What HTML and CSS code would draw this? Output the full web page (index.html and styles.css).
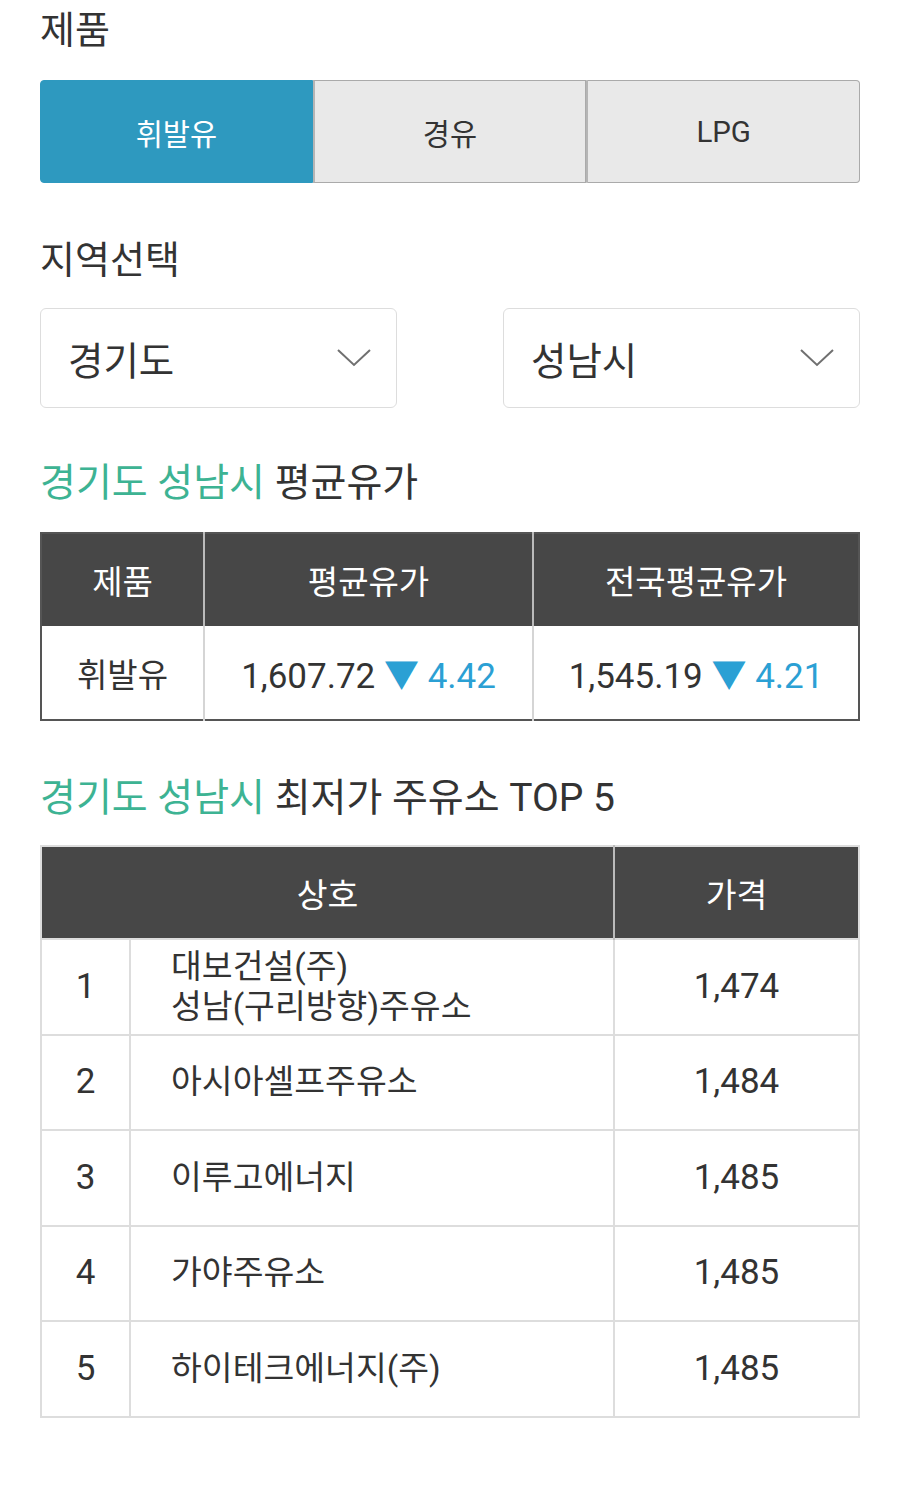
FILE: index.html
```html
<!DOCTYPE html>
<html lang="ko">
<head>
<meta charset="utf-8">
<link rel="stylesheet" href="styles.css">
</head>
<body>
<div class="page">
  <h2 class="title">제품</h2>
  <div class="tabs">
    <div class="tab active">휘발유</div>
    <div class="tab">경유</div>
    <div class="tab">LPG</div>
  </div>

  <h2 class="title region-title">지역선택</h2>
  <div class="selects">
    <div class="select">
      <span>경기도</span>
      <svg class="chev" width="36" height="20" viewBox="0 0 36 20"><path d="M2 2 L18 17 L34 2" fill="none" stroke="#707070" stroke-width="2"/></svg>
    </div>
    <div class="select">
      <span>성남시</span>
      <svg class="chev" width="36" height="20" viewBox="0 0 36 20"><path d="M2 2 L18 17 L34 2" fill="none" stroke="#707070" stroke-width="2"/></svg>
    </div>
  </div>

  <h3 class="heading avg-heading"><span class="green">경기도 성남시</span> 평균유가</h3>
  <table class="avg">
    <thead>
      <tr><th class="c1">제품</th><th class="c2">평균유가</th><th class="c3">전국평균유가</th></tr>
    </thead>
    <tbody>
      <tr>
        <td>휘발유</td>
        <td><span class="digits">1,607.72 <span class="blue">▼ 4.42</span></span></td>
        <td><span class="digits">1,545.19 <span class="blue">▼ 4.21</span></span></td>
      </tr>
    </tbody>
  </table>

  <h3 class="heading top-heading"><span class="green">경기도 성남시</span> 최저가 주유소 TOP 5</h3>
  <table class="top">
    <thead>
      <tr><th class="n" colspan="2">상호</th><th class="p">가격</th></tr>
    </thead>
    <tbody>
      <tr><td class="num">1</td><td class="name">대보건설(주)<br>성남(구리방향)주유소</td><td class="price">1,474</td></tr>
      <tr><td class="num">2</td><td class="name">아시아셀프주유소</td><td class="price">1,484</td></tr>
      <tr><td class="num">3</td><td class="name">이루고에너지</td><td class="price">1,485</td></tr>
      <tr><td class="num">4</td><td class="name">가야주유소</td><td class="price">1,485</td></tr>
      <tr><td class="num">5</td><td class="name">하이테크에너지(주)</td><td class="price">1,485</td></tr>
    </tbody>
  </table>
</div>
</body>
</html>
```

FILE: styles.css
```css
* { box-sizing: border-box; }
html, body { margin: 0; padding: 0; background: #fff; }
body {
  font-family: Roboto, "Noto Sans CJK KR", sans-serif;
  color: #333;
}
.page { padding: 0 40px; }

.title {
  margin: 0;
  font-size: 38px;
  font-weight: 400;
  line-height: 60px;
  color: #333;
}
.tabs {
  display: flex;
  margin-top: 20px;
  height: 103px;
}
.tab {
  flex: 1;
  display: flex;
  align-items: center;
  justify-content: center;
  font-size: 29.5px;
  background: #e9e9e9;
  border: 1px solid #aaa;
  color: #333;
}
.tab + .tab { border-left: 2px solid #b5b5b5; }
.tab:first-child { border-radius: 4px 0 0 4px; }
.tab:last-child { border-radius: 0 4px 4px 0; }
.tab.active {
  background: #2e99bf;
  border-color: #2e99bf;
  color: #fff;
}
.region-title { margin-top: 47px; }

.selects {
  display: flex;
  justify-content: space-between;
  margin-top: 18px;
}
.select {
  width: 357px;
  height: 100px;
  border: 1px solid #ddd;
  border-radius: 6px;
  display: flex;
  align-items: center;
  justify-content: space-between;
  padding: 0 24px 0 27px;
  font-size: 38.5px;
  color: #333;
}

.heading {
  margin: 0;
  font-size: 39px;
  font-weight: 400;
  line-height: 50px;
  color: #333;
}
.green { color: #3db393; }
.blue { color: #2ba0d4; }
.avg-heading { margin-top: 50px; }

table { border-collapse: collapse; width: 100%; }
.avg { margin-top: 24px; border: 2px solid #555; }
.avg th {
  background: #474747;
  color: #fff;
  font-weight: 400;
  font-size: 33px;
  height: 93px;
  border-left: 2px solid #bbb;
}
.avg th:first-child { border-left: none; }
.avg .c1 { width: 163px; }
.avg .c2 { width: 329px; }
.avg td {
  height: 94px;
  text-align: center;
  font-size: 33px;
  border-left: 2px solid #d5d5d5;
}
.avg td:first-child { border-left: none; }
.digits { font-size: 35px; }

.top-heading { margin-top: 52px; }
.top { margin-top: 22px; border: 2px solid #ddd; }
.top th {
  background: #474747;
  color: #fff;
  font-weight: 400;
  font-size: 33.5px;
  height: 93px;
}
.top th.p { border-left: 2px solid #bbb; width: 245px; }
.top td {
  height: 95.5px;
  border: 2px solid #ddd;
  font-size: 33.5px;
  line-height: 40px;
}
.top td.num { width: 89px; text-align: center; font-size: 35px; }
.top td.name { padding-left: 40px; }
.top td.price { text-align: center; font-size: 35px; }
```
